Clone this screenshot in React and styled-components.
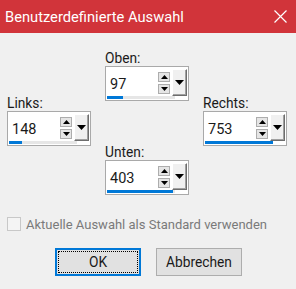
import React from 'react';
import styled, { createGlobalStyle } from 'styled-components';

const Global = createGlobalStyle`
  html, body {
    margin: 0;
    padding: 0;
    background: #f0f0f0;
  }
  body {
    font-family: Roboto, "Noto Sans", sans-serif;
    color: #1a1a1a;
  }
`;

const Dialog = styled.div`
  width: 296px;
  height: 289px;
  background: #f0f0f0;
  display: flex;
  flex-direction: column;
  overflow: hidden;
`;

const TitleBar = styled.div`
  height: 33px;
  background: #d1343a;
  color: #fff;
  display: flex;
  align-items: center;
  justify-content: space-between;
  padding: 0 9px 0 5px;
  font-size: 14.7px;
`;

const CloseBtn = styled.div`
  width: 14px;
  height: 14px;
  display: flex;
  align-items: center;
  justify-content: center;
`;

const Body = styled.div`
  display: flex;
  flex-direction: column;
  padding: 0 7px;
`;

const Fields = styled.div`
  display: flex;
  gap: 14px;
  align-items: flex-start;
  margin-top: 17px;
`;

const Column = styled.div`
  width: 84px;
  display: flex;
  flex-direction: column;
  gap: 43px;
  margin-top: ${p => p.offset || 0}px;
`;

const Field = styled.div`
  display: flex;
  flex-direction: column;
`;

const Label = styled.div`
  font-size: 13.75px;
  line-height: 16px;
  color: #1a1a1a;
`;

const SpinBox = styled.div`
  position: relative;
  height: 35px;
  box-sizing: border-box;
  border: 1px solid #a9a9a9;
  background: #fff;
  display: flex;
  align-items: center;
  padding: 0 1px 0 4px;
`;

const Value = styled.div`
  flex: 1;
  font-size: 14.5px;
  color: #1a1a1a;
  padding-top: 1px;
`;

const Arrows = styled.div`
  display: flex;
  flex-direction: column;
  gap: 2px;
  margin-right: 2px;
  margin-top: -1px;
`;

const ArrowBtn = styled.div`
  width: 12px;
  height: 10px;
  box-sizing: border-box;
  border: 1px solid #adadad;
  background: #e5e5e5;
  display: flex;
  align-items: center;
  justify-content: center;
`;

const DropBtn = styled.div`
  width: 15px;
  height: 27px;
  box-sizing: border-box;
  background: #f0f0f0;
  border-top: 1px solid #fff;
  border-left: 1px solid #fff;
  border-right: 1px solid #6d6d6d;
  border-bottom: 1px solid #6d6d6d;
  box-shadow: inset -1px -1px 0 #a0a0a0;
  display: flex;
  align-items: center;
  justify-content: center;
  margin-top: -2px;
`;

const Track = styled.div`
  position: absolute;
  left: 1px;
  bottom: 1px;
  width: 68px;
  height: 3px;
  background: #e6e6e6;
`;

const Bar = styled.div`
  height: 100%;
  background: #0078d7;
`;

const CheckRow = styled.div`
  display: flex;
  align-items: center;
  gap: 5px;
  margin-top: 20px;
  height: 18px;
  font-size: 13px;
  white-space: nowrap;
  color: #7a7a7a;
`;

const Check = styled.div`
  width: 14px;
  height: 14px;
  flex-shrink: 0;
  box-sizing: border-box;
  border: 1px solid #c8c8c8;
  background: #f4f4f4;
`;

const Buttons = styled.div`
  display: flex;
  justify-content: center;
  gap: 15px;
  margin-top: 15px;
  padding-left: 1px;
`;

const Button = styled.div`
  width: 86px;
  height: 28px;
  box-sizing: border-box;
  background: #e1e1e1;
  border: ${p => (p.primary ? '2px solid #0078d7' : '1px solid #adadad')};
  display: flex;
  align-items: center;
  justify-content: center;
  font-size: 13.75px;
  color: #1a1a1a;
  position: relative;
`;

const Focus = styled.div`
  position: absolute;
  inset: 1px;
  border: 1px dotted #000;
`;

const Up = () => (
  <svg width="7" height="4" viewBox="0 0 7 4"><path d="M0 4 L3.5 0 L7 4 Z" fill="#000" /></svg>
);
const Down = () => (
  <svg width="7" height="4" viewBox="0 0 7 4"><path d="M0 0 L7 0 L3.5 4 Z" fill="#000" /></svg>
);
const DropArrow = () => (
  <svg width="9" height="5" viewBox="0 0 9 5"><path d="M0 0 L9 0 L4.5 5 Z" fill="#000" /></svg>
);

const Spinner = ({ label, value, bar }) => (
  <Field>
    <Label>{label}</Label>
    <SpinBox>
      <Value>{value}</Value>
      <Arrows>
        <ArrowBtn><Up /></ArrowBtn>
        <ArrowBtn><Down /></ArrowBtn>
      </Arrows>
      <DropBtn><DropArrow /></DropBtn>
      <Track>
        <Bar style={{ width: bar }} />
      </Track>
    </SpinBox>
  </Field>
);

export default function App() {
  return (
    <Dialog>
      <Global />
      <TitleBar>
        <span>Benutzerdefinierte Auswahl</span>
        <CloseBtn>
          <svg width="13" height="13" viewBox="0 0 13 13">
            <path d="M0.5 0.5 L12.5 12.5 M12.5 0.5 L0.5 12.5" stroke="#fff" strokeWidth="1.2" />
          </svg>
        </CloseBtn>
      </TitleBar>
      <Body>
        <Fields>
          <Column offset={45}>
            <Spinner label="Links:" value="148" bar={13} />
          </Column>
          <Column>
            <Spinner label="Oben:" value="97" bar={16} />
            <Spinner label="Unten:" value="403" bar={66} />
          </Column>
          <Column offset={45}>
            <Spinner label="Rechts:" value="753" bar={68} />
          </Column>
        </Fields>
        <CheckRow>
          <Check />
          <span>Aktuelle Auswahl als Standard verwenden</span>
        </CheckRow>
        <Buttons>
          <Button primary>
            <Focus />
            OK
          </Button>
          <Button>Abbrechen</Button>
        </Buttons>
      </Body>
    </Dialog>
  );
}
